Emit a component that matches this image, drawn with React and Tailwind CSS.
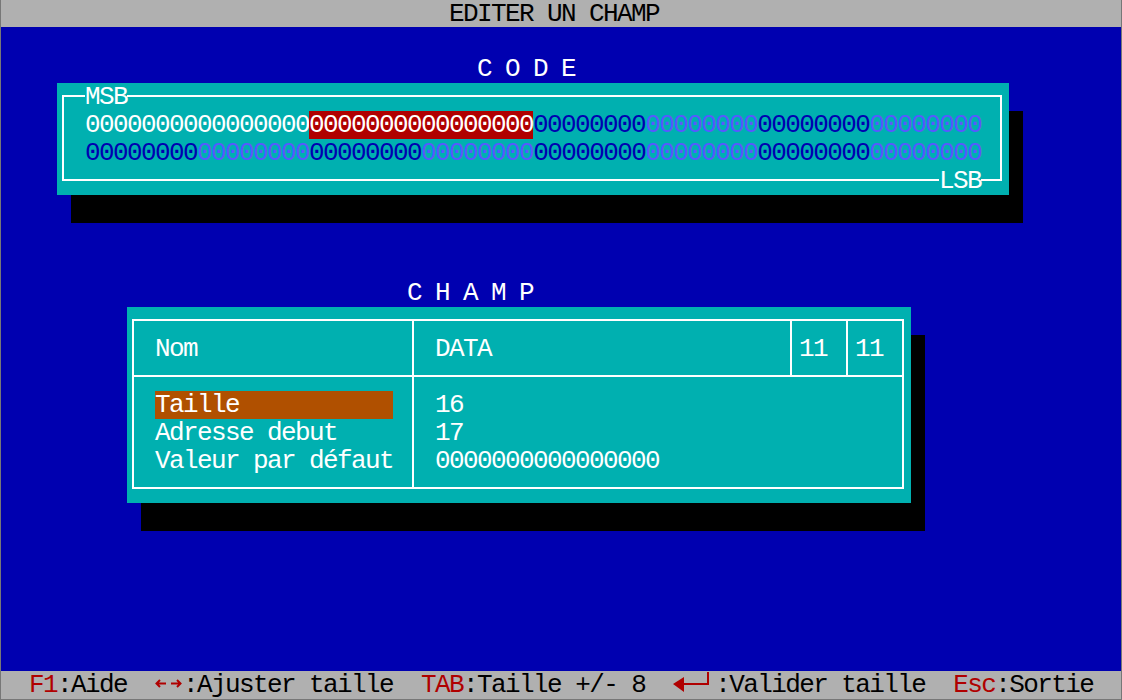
import React from 'react';

// DOS text-mode screen: 80x25 cells, each 14px wide and 28px tall
const DK = 'text-[#0000b0]';
const LT = 'text-[#5858ff]';

const row1 = [
  [16, 'text-white'],
  [16, 'text-white bg-[#b00000] inline-block h-[28px]'],
  [8, DK],
  [8, LT],
  [8, DK],
  [8, LT],
];

const row2 = [
  [8, DK],
  [8, LT],
  [8, DK],
  [8, LT],
  [8, DK],
  [8, LT],
  [8, DK],
  [8, LT],
];

const Bits = ({ groups }) => (
  <div className="h-[28px] whitespace-pre">
    {groups.map(([n, cls], i) => (
      <span key={i} className={cls}>
        {'0'.repeat(n)}
      </span>
    ))}
  </div>
);

const Arrows = () => (
  <svg width="28" height="28" viewBox="0 0 28 28" className="inline-block align-top">
    <g stroke="#b00000" strokeWidth="2" fill="none">
      <path d="M5 9 L1.5 12.5 L5 16 M1.5 12.5 H11" />
      <path d="M22 9 L25.5 12.5 L22 16 M16 12.5 H25.5" />
    </g>
  </svg>
);

const EnterKey = () => (
  <svg width="42" height="28" viewBox="0 0 42 28" className="inline-block align-top">
    <polygon points="0,13 11,6 11,21" fill="#b00000" />
    <rect x="11" y="12" width="25" height="2" fill="#b00000" />
    <rect x="34" y="1" width="2" height="13" fill="#b00000" />
  </svg>
);

const CodePanel = () => (
  <div className="ml-[56px] w-[952px] h-[112px] bg-[#00b0b0] shadow-[14px_28px_0_0_#000] pt-[12px] pl-[5px]">
    <div className="relative w-[940px] h-[86px] border-2 border-white pl-[21px] pt-[14px]">
      <span className="absolute left-[21px] top-[-14px] h-[28px] bg-[#00b0b0] text-white">MSB</span>
      <Bits groups={row1} />
      <Bits groups={row2} />
      <span className="absolute left-[875px] top-[70px] h-[28px] bg-[#00b0b0] text-white">LSB</span>
    </div>
  </div>
);

const ChampPanel = () => (
  <div className="ml-[126px] w-[784px] h-[196px] bg-[#00b0b0] shadow-[14px_28px_0_0_#000] pt-[12px] pl-[5px] text-white">
    <div className="w-[772px] h-[170px] border-2 border-white flex flex-col">
      <div className="h-[56px] border-b-2 border-white flex">
        <div className="w-[280px] border-r-2 border-white pl-[21px] pt-[14px]">Nom</div>
        <div className="w-[378px] border-r-2 border-white pl-[21px] pt-[14px]">DATA</div>
        <div className="w-[56px] border-r-2 border-white pl-[7px] pt-[14px]">11</div>
        <div className="flex-1 pl-[7px] pt-[14px]">11</div>
      </div>
      <div className="flex-1 flex">
        <div className="w-[280px] border-r-2 border-white pl-[21px] pt-[14px] flex flex-col">
          <div className="h-[28px]">
            <span className="inline-block w-[238px] h-[28px] bg-[#b05000]">Taille</span>
          </div>
          <div className="h-[28px] whitespace-pre">Adresse debut</div>
          <div className="h-[28px] whitespace-pre">Valeur par défaut</div>
        </div>
        <div className="flex-1 pl-[21px] pt-[14px] flex flex-col">
          <div className="h-[28px]">16</div>
          <div className="h-[28px]">17</div>
          <div className="h-[28px]">0000000000000000</div>
        </div>
      </div>
    </div>
  </div>
);

export default function App() {
  return (
    <div className="w-[1122px] h-[700px] border-x border-b border-[#777777] bg-[#0000b0] flex flex-col font-['Liberation_Mono',monospace] text-[26px] tracking-[-1.6px] leading-[28px] overflow-hidden">
      <div className="h-[27px] bg-[#b0b0b0] pl-[448px] text-black whitespace-pre">
        <span className="inline-block h-[27px] leading-[26px]">EDITER UN CHAMP</span>
      </div>

      <div className="flex-1 flex flex-col">
        <div className="h-[28px]" />
        <div className="h-[28px] pl-[476px] text-white whitespace-pre">C O D E</div>
        <CodePanel />
        <div className="h-[84px]" />
        <div className="h-[28px] pl-[406px] text-white whitespace-pre">C H A M P</div>
        <ChampPanel />
      </div>

      <div className="h-[28px] bg-[#b0b0b0] pl-[28px] text-black whitespace-pre">
        <span className="text-[#b00000]">F1</span>
        <span>:Aide  </span>
        <Arrows />
        <span>:Ajuster taille  </span>
        <span className="text-[#b00000]">TAB</span>
        <span>:Taille +/- 8  </span>
        <EnterKey />
        <span>:Valider taille  </span>
        <span className="text-[#b00000]">Esc</span>
        <span>:Sortie</span>
      </div>
    </div>
  );
}
